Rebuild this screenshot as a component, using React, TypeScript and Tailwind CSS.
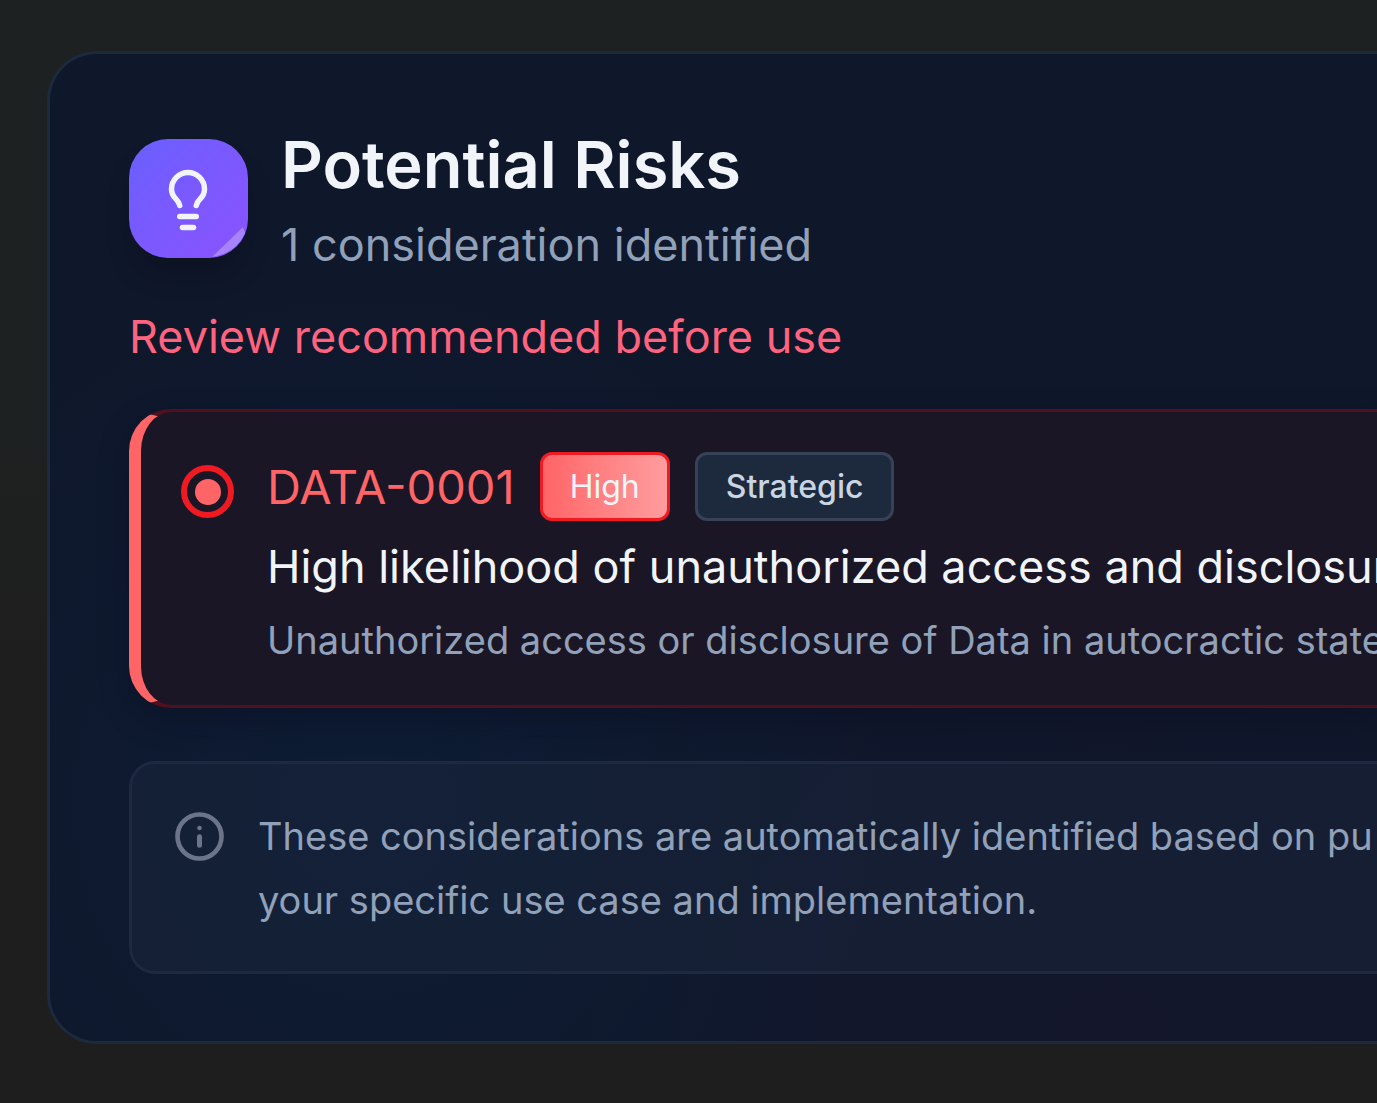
import React from "react";
import { Lightbulb } from "lucide-react";

function InfoIcon() {
  return (
    <svg viewBox="0 0 147 147" className="h-[49px] w-[49px] shrink-0" fill="none" stroke="#6b7489" aria-hidden="true">
      <circle cx="73.500" cy="73.500" r="66" strokeWidth="14" />
      <path d="M73.500 74 V100" strokeWidth="15" strokeLinecap="round" />
      <circle cx="73.500" cy="48" r="7" fill="#6b7489" stroke="none" />
    </svg>
  );
}

function Header() {
  return (
    <header className="flex items-start gap-[33px]">
      <div className="relative mt-3 flex h-[119px] w-[119px] shrink-0 items-center justify-center rounded-[39px] bg-linear-to-br from-[#6a5fff] to-[#8a52ff] pt-0.5 pr-px shadow-[0_20px_24px_-8px_rgba(10,13,24,0.5)]">
        <Lightbulb size={66} strokeWidth={2} className="text-slate-100" aria-hidden="true" />
        <svg viewBox="0 0 36 36" className="absolute right-0 bottom-0 h-9 w-9" aria-hidden="true">
          <path d="M0 35 L31 5 L33 11 Q24 31 0 35 Z" fill="#a684ff" />
        </svg>
      </div>
      <div className="whitespace-nowrap">
        <h1 className="text-[65px] leading-[76px] font-semibold text-slate-100">Potential Risks</h1>
        <p className="mt-2 text-[45px] leading-[68px] text-[#90a1b9]">1 consideration identified</p>
      </div>
    </header>
  );
}

function RiskItem() {
  return (
    <article className="mt-[38px] flex items-start gap-[33px] overflow-hidden rounded-l-[42px] border-y-[3px] border-l-12 border-y-[#50101e] border-l-[#ff6467] bg-[#1b1625] pt-10 pb-[35px] pl-10 whitespace-nowrap shadow-[0_12px_30px_rgba(10,12,28,0.35)]">
      <span className="mt-[13px] flex h-[53px] w-[53px] shrink-0 items-center justify-center rounded-full border-6 border-[#f01a22]" aria-hidden="true">
        <span className="h-[26px] w-[26px] rounded-full bg-[#ff6467]" />
      </span>
      <div className="min-w-0">
        <div className="flex items-center gap-[25px]">
          <span className="text-[47px] leading-[69px] text-[#ff6467]">DATA-0001</span>
          <span className="rounded-xl border-3 border-[#f01a22] bg-linear-to-r from-[#ff6467] to-[#ff9c9e] px-[27px] text-[32px] leading-[63px] text-slate-100">High</span>
          <span className="rounded-xl border-3 border-[#364357] bg-[#1d293d] px-7 text-[32px] leading-[63px] font-medium text-slate-300">Strategic</span>
        </div>
        <h2 className="mt-2.5 text-[45px] leading-[72px] text-slate-100">High likelihood of unauthorized access and disclosure</h2>
        <p className="mt-[7px] text-[38px] leading-[60px] text-[#90a1b9]">Unauthorized access or disclosure of Data in autocractic state</p>
      </div>
    </article>
  );
}

function Notice() {
  return (
    <aside className="mt-[53px] flex items-start gap-[34px] overflow-hidden rounded-l-[26px] border-y-[3px] border-l-[3px] border-[#1d2940] bg-[#1d293d]/45 pt-10 pb-[39px] pl-[43px] whitespace-nowrap">
      <div className="mt-2">
        <InfoIcon />
      </div>
      <p className="text-[38px] leading-[64px] text-[#90a1b9]">
        These considerations are automatically identified based on pu
        <br />
        your specific use case and implementation.
      </p>
    </aside>
  );
}

export default function App() {
  return (
    <main className="min-h-screen overflow-hidden bg-[linear-gradient(180deg,#1e2121,#1e2121_40%,#1e1e1e_60%)] pt-[51px] pb-[58px] pl-[47px] font-['Inter',sans-serif]">
      <section className="rounded-l-[50px] border-y-[3px] border-l-[3px] border-[#1d293d] bg-[#0f172b] bg-[radial-gradient(circle_at_24%_76%,rgba(8,40,72,0.3),transparent_42%),radial-gradient(circle_at_80%_100%,rgba(70,20,50,0.08),transparent_38%)] pt-[73px] pb-[67px] pl-[79px]">
        <Header />
        <p className="mt-6 text-[45px] leading-[68px] whitespace-nowrap text-[#ff637e]">Review recommended before use</p>
        <RiskItem />
        <Notice />
      </section>
    </main>
  );
}
